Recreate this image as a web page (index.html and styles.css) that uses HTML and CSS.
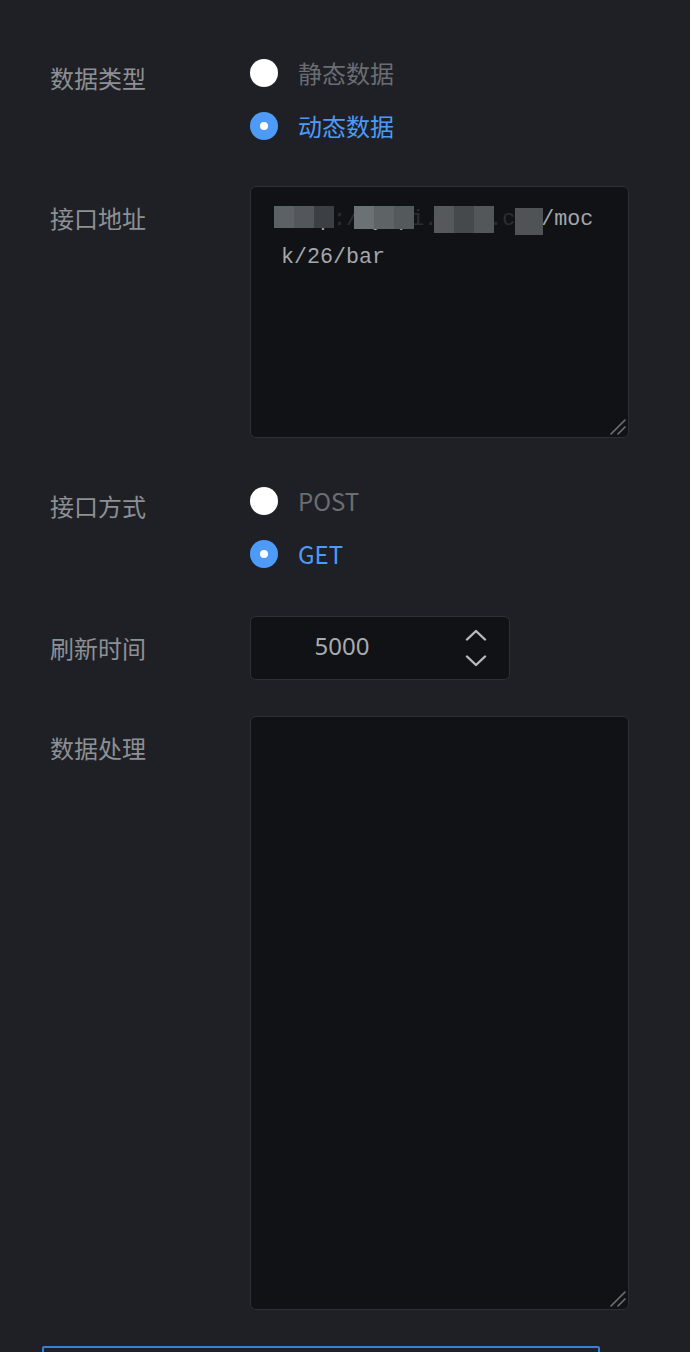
FILE: index.html
```html
<!DOCTYPE html>
<html lang="zh">
<head>
<meta charset="utf-8">
<title>数据设置</title>
<link rel="stylesheet" href="styles.css">
</head>
<body>
<div class="page">
  <div class="form">
    <div class="row row-radio">
      <div class="label">数据类型</div>
      <div class="radio-group">
        <div class="radio"><span class="dot"></span><span class="radio-text">静态数据</span></div>
        <div class="radio checked"><span class="dot"></span><span class="radio-text">动态数据</span></div>
      </div>
    </div>

    <div class="row row-url">
      <div class="label label-top">接口地址</div>
      <div class="area-wrap">
        <textarea class="area area-url" spellcheck="false">http://yapi.xxxx.com/mock/26/bar</textarea>
        <div class="mosaic">
          <i class="t1"></i><i class="t2"></i><i class="t3"></i>
          <i class="gap"></i>
          <i class="t4 tb"></i><i class="t7 tb"></i><i class="t8 tb"></i>
          <i class="gap"></i>
          <i class="t5 tc"></i><i class="t3b tc"></i><i class="t9 tc"></i>
          <i class="gap gap-s"></i>
          <i class="t6 td"></i>
        </div>
        <svg class="grip" width="16" height="16" viewBox="0 0 16 16"><path d="M1 15 L15 1 M8 15 L15 8" stroke="#6d7074" stroke-width="1.6" stroke-linecap="round"/></svg>
      </div>
    </div>

    <div class="row row-radio">
      <div class="label">接口方式</div>
      <div class="radio-group">
        <div class="radio"><span class="dot"></span><span class="radio-text">POST</span></div>
        <div class="radio checked"><span class="dot"></span><span class="radio-text">GET</span></div>
      </div>
    </div>

    <div class="row row-num">
      <div class="label">刷新时间</div>
      <div class="number">
        <span class="num-value">5000</span>
        <span class="num-ctrl">
          <svg width="22" height="12" viewBox="0 0 22 12"><path d="M2 10.5 L11 2 L20 10.5" fill="none" stroke="#b7babe" stroke-width="2.4" stroke-linecap="round" stroke-linejoin="round"/></svg>
          <svg width="22" height="12" viewBox="0 0 22 12"><path d="M2 1.5 L11 10 L20 1.5" fill="none" stroke="#b7babe" stroke-width="2.4" stroke-linecap="round" stroke-linejoin="round"/></svg>
        </span>
      </div>
    </div>

    <div class="row row-proc">
      <div class="label label-top">数据处理</div>
      <div class="area-wrap area-wrap-big">
        <textarea class="area area-proc" spellcheck="false"></textarea>
        <svg class="grip" width="16" height="16" viewBox="0 0 16 16"><path d="M1 15 L15 1 M8 15 L15 8" stroke="#6d7074" stroke-width="1.6" stroke-linecap="round"/></svg>
      </div>
    </div>

    <div class="bottom-box"></div>
  </div>
</div>
</body>
</html>
```

FILE: styles.css
```css
html, body {
  margin: 0;
  padding: 0;
  background: #ffffff;
}

.page {
  width: 690px;
  height: 1352px;
  overflow: hidden;
  background: #1f2025;
  font-family: "Noto Sans CJK SC", "Noto Sans", sans-serif;
  color-scheme: dark;
}

.form {
  padding: 53px 0 0 42px;
  display: flex;
  flex-direction: column;
}

.row {
  display: flex;
  padding-left: 8px;
}

.label {
  width: 200px;
  flex: none;
  font-size: 24px;
  line-height: 40px;
  color: #8d9095;
}

.row-radio .label {
  margin-top: 5px;
}

.label-top {
  margin-top: 12px;
}

.row-radio {
  margin-bottom: 40px;
}

.row-radio + .row-num {
  margin-top: 2px;
}

.radio-group {
  display: flex;
  flex-direction: column;
  gap: 13px;
}

.radio {
  display: flex;
  align-items: center;
  gap: 20px;
  height: 40px;
}

.dot {
  width: 28px;
  height: 28px;
  border-radius: 50%;
  background: #ffffff;
  box-sizing: border-box;
  display: flex;
  align-items: center;
  justify-content: center;
}

.radio-text {
  font-size: 24px;
  line-height: 40px;
  color: #6a6d72;
}

.radio.checked .dot {
  background: #4d9bf6;
}

.radio.checked .dot::after {
  content: "";
  width: 8px;
  height: 8px;
  border-radius: 50%;
  background: #ffffff;
}

.radio.checked .radio-text {
  color: #4d9bf6;
}

.row-url {
  margin-bottom: 43px;
}

.area-wrap {
  position: relative;
  width: 379px;
  height: 252px;
}

.area-wrap-big {
  height: 594px;
}

.area {
  display: block;
  width: 100%;
  height: 100%;
  box-sizing: border-box;
  margin: 0;
  border: 1px solid #2b2f38;
  border-radius: 6px;
  background: #111216;
  padding: 14px 25px 12px 30px;
  font-family: "Liberation Mono", monospace;
  font-size: 21.7px;
  line-height: 38px;
  color: #a4a7ab;
  word-break: break-all;
  overflow: hidden;
  resize: none;
  outline: none;
}

.grip {
  position: absolute;
  right: 3px;
  bottom: 3px;
}

.mosaic {
  position: absolute;
  left: 24px;
  top: 20px;
  display: flex;
  align-items: flex-start;
}

.mosaic i {
  display: block;
  width: 20px;
  height: 22px;
}

.mosaic .tb { height: 23px; }
.mosaic .tc { height: 27px; }
.mosaic .td { width: 28px; height: 27px; margin-top: 2px; }
.mosaic .gap { background: rgba(17, 18, 22, 0.82); height: 26px; }
.mosaic .gap-s { width: 21px; }

.t1 { background: #5c6165; }
.t2 { background: #53575b; }
.t3 { background: #3c3f43; }
.t3b { background: #46494c; }
.t4 { background: #6b7174; }
.t5 { background: #55595c; }
.t6 { background: #4f5356; }
.t7 { background: #5e6366; }
.t8 { background: #54595c; }
.t9 { background: #53575a; }

.row-num {
  align-items: center;
  margin-bottom: 36px;
}

.number {
  width: 260px;
  height: 64px;
  box-sizing: border-box;
  border: 1px solid #2b2f38;
  border-radius: 6px;
  background: #111216;
  display: flex;
  align-items: center;
}

.num-value {
  width: 182px;
  text-align: center;
  font-size: 24px;
  line-height: 32px;
  padding-bottom: 5px;
  color: #a8abaf;
  font-family: "Noto Sans", sans-serif;
}

.num-ctrl {
  flex: 1;
  display: flex;
  flex-direction: column;
  align-items: center;
  gap: 14px;
  padding-left: 10px;
}

.num-ctrl svg {
  display: block;
}

.row-proc {
  margin-bottom: 36px;
}

.bottom-box {
  width: 558px;
  height: 60px;
  box-sizing: border-box;
  border: 2px solid #3b7fd4;
  border-radius: 2px;
  background: #1f2025;
}
```
